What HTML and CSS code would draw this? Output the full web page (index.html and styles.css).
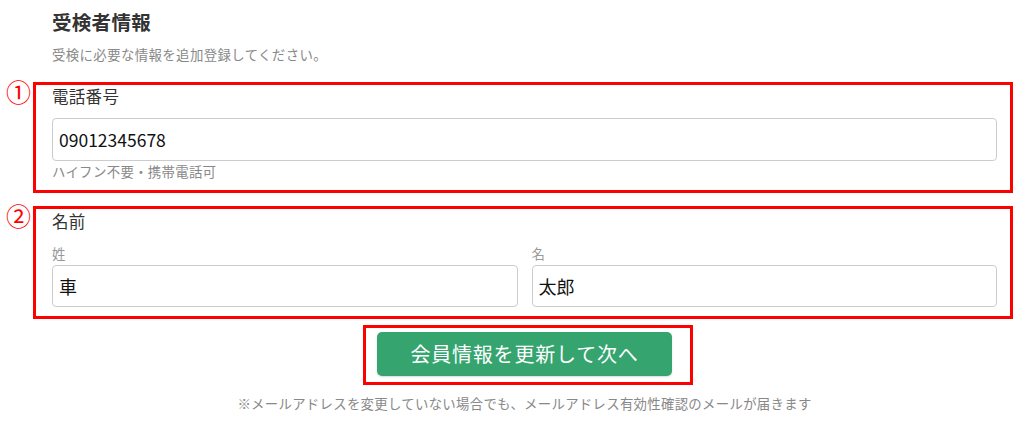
FILE: index.html
```html
<!DOCTYPE html>
<html lang="ja">
<head>
<meta charset="utf-8">
<title>受検者情報</title>
<link rel="stylesheet" href="styles.css">
</head>
<body>
<main class="page">
  <header class="head">
    <h1 class="title">受検者情報</h1>
    <p class="lead">受検に必要な情報を追加登録してください。</p>
  </header>

  <section class="field-box box-phone">
    <span class="marker">①</span>
    <div class="field-label">電話番号</div>
    <div class="input">09012345678</div>
    <div class="hint">ハイフン不要・携帯電話可</div>
  </section>

  <section class="field-box box-name">
    <span class="marker">②</span>
    <div class="field-label">名前</div>
    <div class="name-grid">
      <div class="name-col">
        <div class="sub-label">姓</div>
        <div class="input input-name">車</div>
      </div>
      <div class="name-col">
        <div class="sub-label">名</div>
        <div class="input input-name">太郎</div>
      </div>
    </div>
  </section>

  <div class="actions">
    <div class="btn-wrap">
      <button class="btn">会員情報を更新して次へ</button>
    </div>
  </div>
  <p class="note">※メールアドレスを変更していない場合でも、メールアドレス有効性確認のメールが届きます</p>
</main>
</body>
</html>
```

FILE: styles.css
```css
html, body {
  margin: 0;
  padding: 0;
  background: #fff;
}
body {
  font-family: "Noto Sans CJK JP", "Noto Sans", sans-serif;
  color: #333;
}
.page {
  padding: 0 18px 0 33px;
}
.head {
  padding: 9px 19px 0;
}
.title {
  margin: 0;
  font-size: 19.5px;
  line-height: 26px;
  font-weight: bold;
  color: #333;
  letter-spacing: 0.3px;
}
.lead {
  margin: 10px 0 0;
  font-size: 13.4px;
  line-height: 18px;
  color: #888;
  letter-spacing: 0.4px;
}
.field-box {
  position: relative;
  border: 3px solid #ff0000;
  padding: 0 13px 10px 16px;
}
.box-phone {
  margin-top: 19px;
}
.box-name {
  margin-top: 13px;
  padding-top: 1px;
  padding-bottom: 9px;
}
.marker {
  position: absolute;
  left: -30px;
  top: -7px;
  font-size: 25px;
  line-height: 26px;
  color: #ff0000;
}
.field-label {
  font-size: 16.5px;
  line-height: 22px;
  color: #333;
  letter-spacing: 0.3px;
}
.input {
  box-sizing: border-box;
  height: 43px;
  margin-top: 11px;
  padding: 0 6px;
  border: 1px solid #cccccc;
  border-radius: 4px;
  font-size: 17.5px;
  line-height: 41px;
  color: #111;
}
.hint {
  margin-top: 1px;
  font-size: 13.4px;
  line-height: 18px;
  color: #888;
  letter-spacing: 0.3px;
}
.name-grid {
  display: grid;
  grid-template-columns: 1fr 1fr;
  column-gap: 14px;
  margin-top: 12px;
}
.sub-label {
  font-size: 13.4px;
  line-height: 18px;
  color: #999;
}
.input-name {
  height: 42px;
  margin-top: 3px;
  line-height: 40px;
  font-size: 18px;
}
.actions {
  display: flex;
  justify-content: center;
  padding-left: 19px;
  padding-right: 16px;
  margin-top: 13px;
}
.btn-wrap {
  position: relative;
}
.btn-wrap::after {
  content: "";
  position: absolute;
  top: -7px;
  bottom: -9px;
  left: -14px;
  right: -21px;
  border: 3px solid #ff0000;
  pointer-events: none;
}
.btn {
  display: block;
  width: 295px;
  height: 44px;
  border: 0;
  border-radius: 5px;
  background: #35a46f;
  color: #fff;
  font-family: "Noto Sans CJK JP", "Noto Sans", sans-serif;
  font-size: 20px;
  line-height: 44px;
  letter-spacing: 0.8px;
  padding: 0;
  box-shadow: 0 1px 2px rgba(0, 0, 0, 0.15);
}
.note {
  margin: 18px 0 0;
  padding-left: 19px;
  padding-right: 16px;
  text-align: center;
  font-size: 13.4px;
  line-height: 18px;
  color: #888;
  letter-spacing: 0.3px;
}
```
